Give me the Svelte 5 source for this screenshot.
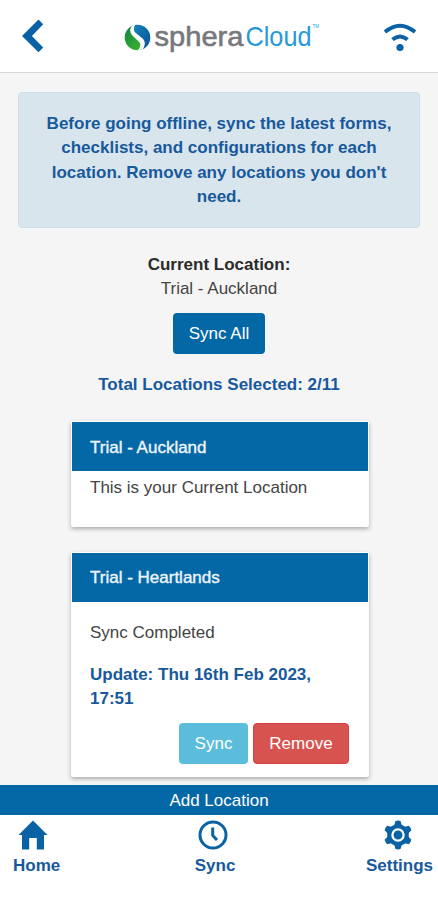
<script>
  const notice = [
    'Before going offline, sync the latest forms,',
    'checklists, and configurations for each',
    "location. Remove any locations you don't",
    'need.'
  ];
</script>

<div class="screen">
  <header>
    <svg class="back" width="22" height="34" viewBox="0 0 22 34" aria-label="Back">
      <path d="M16.500 0.500 21.200 5.200 9.900 17 21.200 28.500 16.500 33.300 0 17Z" fill="#0862a4" />
    </svg>
    <svg class="logo" width="196" height="32" viewBox="0 0 196 32" role="img" aria-label="spheraCloud">
      <defs>
        <linearGradient id="green" x1="0" y1="0" x2="0.6" y2="1">
          <stop offset="0" stop-color="#0d7a48" />
          <stop offset="1" stop-color="#36b02f" />
        </linearGradient>
        <linearGradient id="blue" x1="0" y1="0" x2="1" y2="1">
          <stop offset="0" stop-color="#1687bd" />
          <stop offset="1" stop-color="#064b91" />
        </linearGradient>
        <clipPath id="globe"><circle cx="13.500" cy="15.500" r="12.800" /></clipPath>
      </defs>
      <g clip-path="url(#globe)">
        <path d="M0 0H13C8 4 6 8 8.500 12L16 19C18.500 22 18.500 26 14 30H0Z" fill="url(#green)" />
        <path d="M13 0H28V30H14C19 26 21 22 18.500 17L11 11C9 8 10 3 13 0Z" fill="url(#blue)" />
        <path d="M11.500 1C6.500 5 6 9.500 9 13L16 19.500C18 22 17.500 26 13.500 30" fill="none" stroke="#fff" stroke-width="1.800" />
        <path d="M9.500 10 18.500 17.500C21 20.500 20 25 16.500 29" fill="none" stroke="#fff" stroke-width="1.600" />
      </g>
      <text x="30.500" y="23.500" class="sphera" textLength="89" lengthAdjust="spacingAndGlyphs">sphera</text>
      <text x="121.500" y="23.500" class="cloud" textLength="66" lengthAdjust="spacingAndGlyphs">Cloud</text>
      <text x="188.500" y="5.500" class="tm" textLength="6.500" lengthAdjust="spacingAndGlyphs">TM</text>
    </svg>
    <svg class="wifi" width="34" height="30" viewBox="0 0 34 30" fill="none" stroke="#0862a4" stroke-width="4" aria-label="Online">
      <path d="M2 10Q17-2.500 32 10M9.500 17.500Q17 11.500 24.500 17.500" />
      <circle cx="17" cy="25.500" r="3.600" fill="#0862a4" stroke="none" />
    </svg>
  </header>

  <main>
    <p class="notice">
      {#each notice as line}<span>{line}</span>{/each}
    </p>
    <p class="current"><b>Current Location:</b><span>Trial - Auckland</span></p>
    <button class="all">Sync All</button>
    <p class="total">Total Locations Selected: 2/11</p>

    <article class="first">
      <h2>Trial - Auckland</h2>
      <p>This is your Current Location</p>
    </article>
    <article class="second">
      <h2>Trial - Heartlands</h2>
      <p class="state">Sync Completed</p>
      <p class="update">Update: Thu 16th Feb 2023,<br />17:51</p>
      <div class="actions">
        <button class="sync">Sync</button>
        <button class="remove">Remove</button>
      </div>
    </article>
  </main>

  <button class="add">Add Location</button>
  <nav>
    <a class="home" href="#home">
      <svg width="30" height="30" viewBox="0 0 30 30"><path d="M15 .5 29.500 15H26V29.500H18.800V18H11.200V29.500H4V15H.5Z" fill="#0862a4" /></svg>
      <span>Home</span>
    </a>
    <a class="syncnav" href="#sync">
      <svg width="30" height="30" viewBox="0 0 30 30" fill="none" stroke="#0862a4" stroke-width="3"><circle cx="15" cy="15" r="13" /><path d="M14.700 7.500V15.500L19 20" /></svg>
      <span>Sync</span>
    </a>
    <a class="settings" href="#settings">
      <svg width="30" height="30" viewBox="0 0 30 30">
        <g fill="#0862a4">
          <circle cx="15" cy="15" r="10.800" />
          {#each [0, 60, 120, 180, 240, 300] as a}
            <path d="M11 6 12.500 1Q15 .2 17.500 1L19 6Z" transform="rotate({a} 15 15)" />
          {/each}
        </g>
        <circle cx="15" cy="15" r="5.600" fill="#0862a4" stroke="#fff" stroke-width="2.300" />
      </svg>
      <span>Settings</span>
    </a>
  </nav>
</div>

<style>
  :global(body) { margin: 0; background: #fff; }
  * { box-sizing: border-box; }
  p, h2 { margin: 0; }
  .screen {
    width: 438px; height: 900px; overflow: hidden; display: flex; flex-direction: column;
    background: #f5f5f5; color: #444;
    font: 17px/24.4px "Liberation Sans", Arial, sans-serif;
  }
  header {
    height: 73px; flex: none; display: flex; align-items: flex-start; justify-content: space-between;
    padding: 0 21px 0 22px; background: #fff; border-bottom: 1.500px solid #d9d9d9;
  }
  .back { margin-top: 19px; }
  .logo { margin: 22px 0 0 16px; overflow: visible; }
  .wifi { margin-top: 22px; }
  .sphera { font-size: 28px; fill: #77787b; stroke: #77787b; stroke-width: .6; }
  .cloud { font-size: 28px; fill: #2799d5; }
  .tm { font-size: 5px; fill: #2799d5; }
  main { height: 712px; flex: none; display: flex; flex-direction: column; align-items: center; padding-top: 19px; overflow: hidden; }
  .notice {
    width: 402px; height: 136px; flex: none; padding-top: 19px; text-align: center; border: 1px solid #cde0e7;
    border-radius: 4px; background: #d9e5ec; color: #17599c; font-weight: 700;
  }
  .notice span { display: block; }
  .current { margin-top: 25px; text-align: center; display: flex; flex-direction: column; }
  .current b { color: #2b2b2b; }
  button { border: 0; padding: 0; font: inherit; color: #fff; }
  .all { width: 92px; height: 41px; flex: none; margin-top: 11px; padding-top: 1px; border-radius: 4px; background: #0568a6; }
  .total { margin-top: 19px; color: #17599c; font-weight: 700; }
  article { width: 298px; flex: none; margin-left: 2px; background: #fff; box-shadow: 0 2px 4px #0000004d; padding: 1px; border-radius: 2px; }
  .first { margin-top: 24px; height: 106px; }
  .second { margin-top: 25px; height: 225px; }
  h2 { height: 49px; padding-left: 18px; background: #0568a6; color: #edf4fb; font-size: 17px; line-height: 50px; font-weight: 400; -webkit-text-stroke: .4px #edf4fb; }
  .first h2 { line-height: 51px; }
  article p { padding-left: 18px; }
  .first p { margin-top: 5px; }
  .state { margin-top: 19px; }
  .update { margin-top: 17px; color: #17599c; font-weight: 700; }
  .actions { display: flex; justify-content: flex-end; gap: 5px; margin: 12px 19px 0 0; }
  .actions button { height: 41px; border-radius: 4px; padding-top: 1px; }
  .actions .sync { width: 69px; background: #5bbddb; }
  .actions .remove { width: 96px; background: #d75350; border: 1px solid #d44140; padding-top: 0; }
  .add { height: 30px; flex: none; background: #0568a6; line-height: 31px; }
  nav { flex: 1; display: flex; justify-content: space-between; padding: 5px 5px 0 12px; background: #fff; }
  nav a { display: flex; flex-direction: column; color: #17599c; font-weight: 700; text-decoration: none; }
  nav svg { margin-left: 6px; }
  nav span { line-height: 20px; margin-top: 6px; padding-left: 1px; }
  .syncnav { padding-left: 4px; }
  .syncnav svg { margin-left: 4px; }
  .settings svg { margin-left: 18px; }
</style>
